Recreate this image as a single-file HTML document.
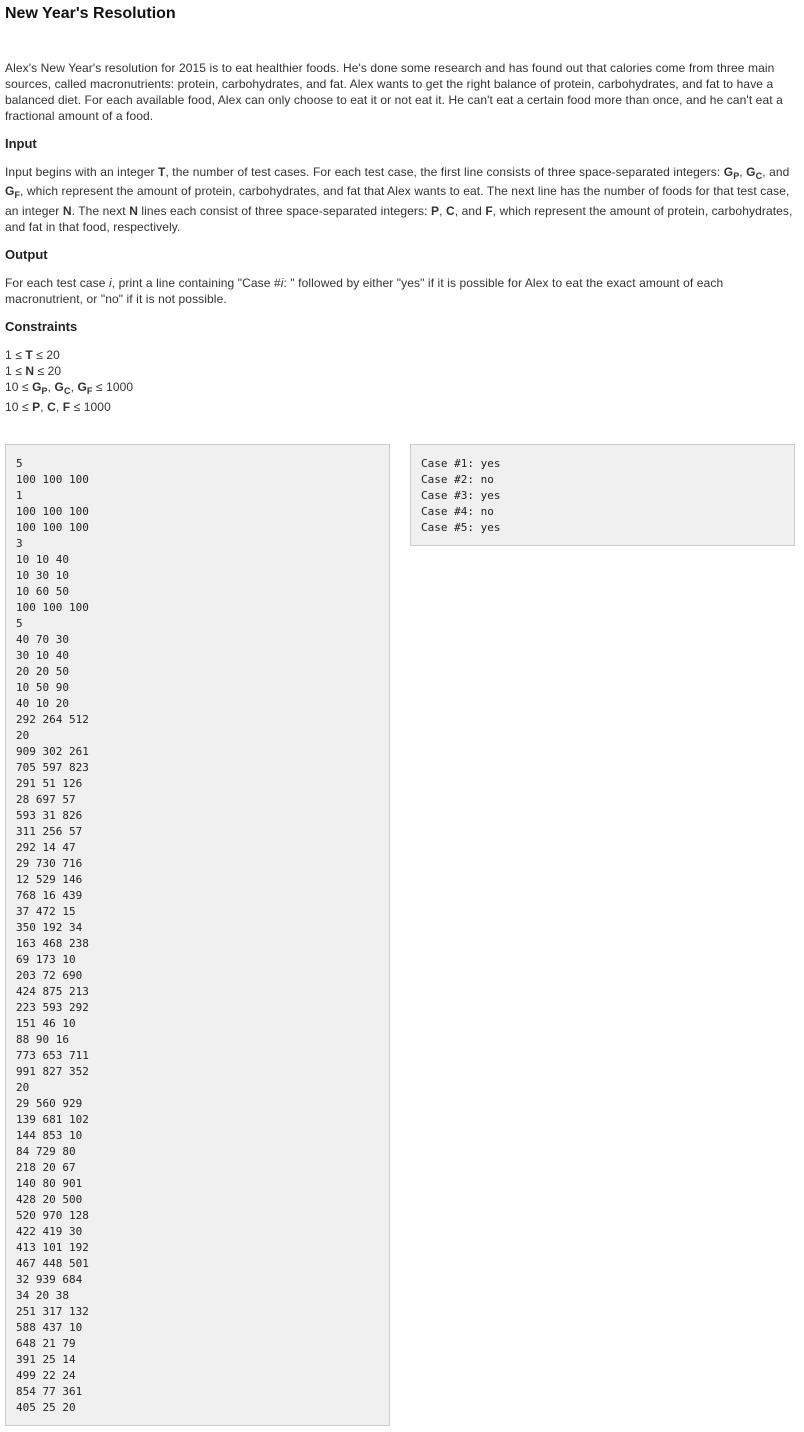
<!DOCTYPE html>
<html><head><meta charset="utf-8"><style>
body{margin:0;width:804px;height:1432px;background:#fff;font-family:"Liberation Sans",Arial,sans-serif;font-size:12px;color:#333;position:relative;overflow:hidden}
.a{position:absolute;left:5px;white-space:nowrap;line-height:16px;letter-spacing:0.1px}
h1{position:absolute;left:5px;top:4px;margin:0;font-size:16px;font-weight:bold;color:#111;line-height:20px}
h3{position:absolute;left:5px;margin:0;font-size:13px;font-weight:bold;color:#222;line-height:16px}
sub{font-size:9px;vertical-align:-3px;line-height:0}
pre{position:absolute;margin:0;background:#f0f0f0;border:1px solid #ccc;padding:11px 10px 9px;font-family:"DejaVu Sans Mono","Liberation Mono",monospace;font-size:11px;line-height:16px;color:#222;box-sizing:border-box}
</style></head><body>
<h1>New Year's Resolution</h1>
<div class="a" style="top:60px">Alex's New Year's resolution for 2015 is to eat healthier foods. He's done some research and has found out that calories come from three main<br>sources, called macronutrients: protein, carbohydrates, and fat. Alex wants to get the right balance of protein, carbohydrates, and fat to have a<br>balanced diet. For each available food, Alex can only choose to eat it or not eat it. He can't eat a certain food more than once, and he can't eat a<br>fractional amount of a food.</div>
<h3 style="top:136px">Input</h3>
<div class="a" style="top:164px">Input begins with an integer <b>T</b>, the number of test cases. For each test case, the first line consists of three space-separated integers: <b>G<sub>P</sub></b>, <b>G<sub>C</sub></b>, and</div>
<div class="a" style="top:183px"><b>G<sub>F</sub></b>, which represent the amount of protein, carbohydrates, and fat that Alex wants to eat. The next line has the number of foods for that test case,</div>
<div class="a" style="top:203px">an integer <b>N</b>. The next <b>N</b> lines each consist of three space-separated integers: <b>P</b>, <b>C</b>, and <b>F</b>, which represent the amount of protein, carbohydrates,<br>and fat in that food, respectively.</div>
<h3 style="top:247px">Output</h3>
<div class="a" style="top:275px">For each test case <i>i</i>, print a line containing "Case #<i>i</i>: " followed by either "yes" if it is possible for Alex to eat the exact amount of each<br>macronutrient, or "no" if it is not possible.</div>
<h3 style="top:319px">Constraints</h3>
<div class="a" style="top:347px">1 ≤ <b>T</b> ≤ 20<br>1 ≤ <b>N</b> ≤ 20</div>
<div class="a" style="top:379px">10 ≤ <b>G<sub>P</sub></b>, <b>G<sub>C</sub></b>, <b>G<sub>F</sub></b> ≤ 1000</div>
<div class="a" style="top:399px">10 ≤ <b>P</b>, <b>C</b>, <b>F</b> ≤ 1000</div>
<pre style="left:5px;top:444px;width:385px;height:982px">5
100 100 100
1
100 100 100
100 100 100
3
10 10 40
10 30 10
10 60 50
100 100 100
5
40 70 30
30 10 40
20 20 50
10 50 90
40 10 20
292 264 512
20
909 302 261
705 597 823
291 51 126
28 697 57
593 31 826
311 256 57
292 14 47
29 730 716
12 529 146
768 16 439
37 472 15
350 192 34
163 468 238
69 173 10
203 72 690
424 875 213
223 593 292
151 46 10
88 90 16
773 653 711
991 827 352
20
29 560 929
139 681 102
144 853 10
84 729 80
218 20 67
140 80 901
428 20 500
520 970 128
422 419 30
413 101 192
467 448 501
32 939 684
34 20 38
251 317 132
588 437 10
648 21 79
391 25 14
499 22 24
854 77 361
405 25 20</pre>
<pre style="left:410px;top:444px;width:385px;height:102px">Case #1: yes
Case #2: no
Case #3: yes
Case #4: no
Case #5: yes</pre>
</body></html>
